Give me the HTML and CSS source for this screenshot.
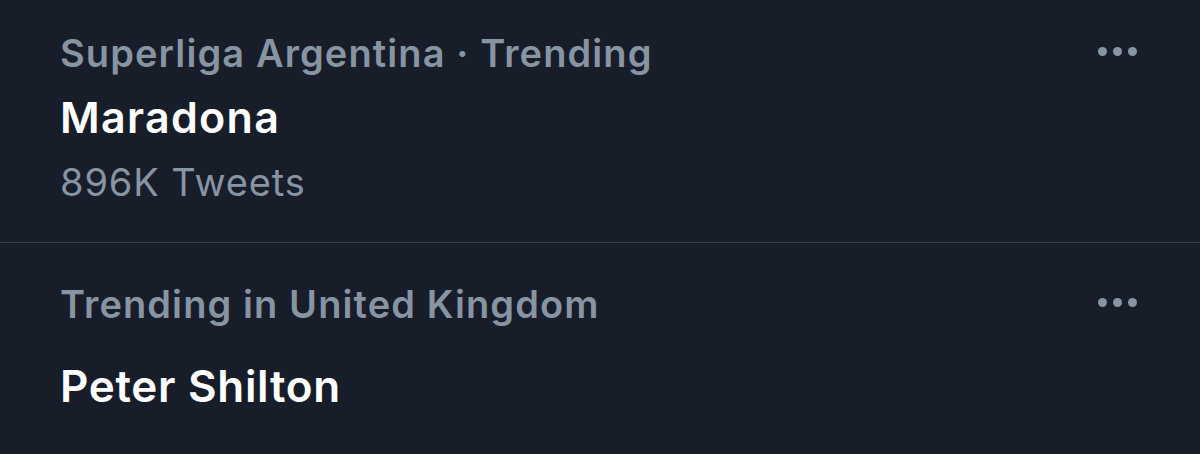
FILE: index.html
```html
<!DOCTYPE html>
<html>
<head>
<meta charset="utf-8">
<link rel="stylesheet" href="styles.css">
</head>
<body>
<div class="trends">
  <div class="trend">
    <div class="trend-body">
      <div class="meta">Superliga Argentina · Trending</div>
      <div class="name">Maradona</div>
      <div class="count">896K Tweets</div>
    </div>
    <div class="more"><span class="dot"></span><span class="dot"></span><span class="dot"></span></div>
  </div>
  <div class="trend second">
    <div class="trend-body">
      <div class="meta">Trending in United Kingdom</div>
      <div class="name spaced">Peter Shilton</div>
    </div>
    <div class="more"><span class="dot"></span><span class="dot"></span><span class="dot"></span></div>
  </div>
</div>
</body>
</html>
```

FILE: styles.css
```css
html, body {
  margin: 0;
  padding: 0;
  background: #171e2a;
  height: 100%;
  overflow: hidden;
}
body {
  font-family: Inter, "Noto Sans", sans-serif;
  -webkit-font-smoothing: antialiased;
}
.trend {
  display: flex;
  justify-content: space-between;
  align-items: flex-start;
  padding: 28px 63px 29px 60px;
}
.trend.second {
  border-top: 1px solid #363e4a;
  padding-top: 36px;
}
.trend-body {
  display: flex;
  flex-direction: column;
}
.meta {
  color: #8794a2;
  font-weight: 600;
  font-size: 38px;
  line-height: 50px;
  letter-spacing: 1.1px;
}
.name {
  color: #ffffff;
  font-weight: 600;
  font-size: 43px;
  line-height: 62px;
  letter-spacing: 1.3px;
  margin-top: 8px;
}
.name.spaced {
  font-size: 44px;
  letter-spacing: 0.7px;
  margin-top: 26px;
}
.count {
  color: #8794a2;
  font-weight: 400;
  font-size: 38px;
  line-height: 62px;
  letter-spacing: 0.9px;
  margin-top: 3px;
}
.more {
  display: flex;
  gap: 6px;
  margin-top: 19px;
}
.dot {
  width: 9px;
  height: 9px;
  border-radius: 50%;
  background: #8794a2;
}
```
